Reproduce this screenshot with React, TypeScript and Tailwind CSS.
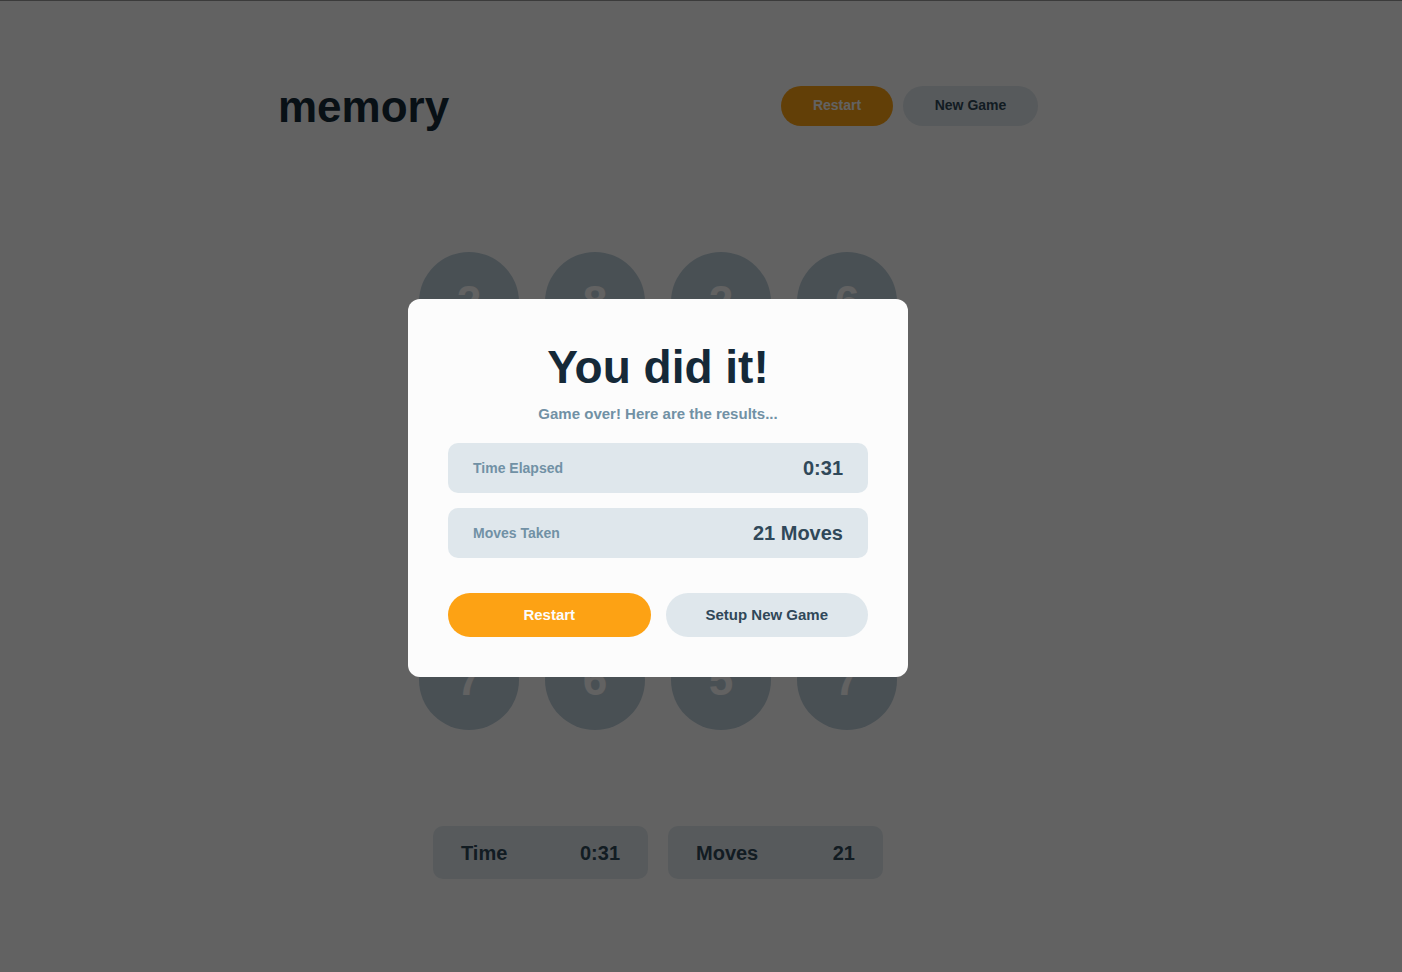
import React from 'react';

const BOARD = [2, 8, 2, 6, 4, 1, 3, 5, 1, 3, 4, 8, 7, 6, 5, 7];

function StatBox({ label, value }: { label: string; value: string }) {
  return (
    <div className="w-[215px] h-[53px] rounded-[10px] bg-[#DFE7EC] flex items-center justify-between px-[28px]">
      <span className="text-[20px] font-bold text-[#304859]">{label}</span>
      <span className="text-[20px] font-bold text-[#304859]">{value}</span>
    </div>
  );
}

function ResultRow({ label, value }: { label: string; value: string }) {
  return (
    <div className="h-[50px] rounded-[10px] bg-[#DFE7EC] flex items-center justify-between px-[25px]">
      <span className="text-[14px] font-bold text-[#7191A5]">{label}</span>
      <span className="text-[20px] font-bold text-[#304859]">{value}</span>
    </div>
  );
}

export default function App() {
  return (
    <div
      className="min-h-screen bg-[#FCFCFC] text-[#152938]"
      style={{ fontFamily: '"Liberation Sans", Arial, sans-serif' }}
    >
      <div className="w-[1316px]">
        {/* header */}
        <header className="w-[760px] mx-auto pt-[82px] flex items-center justify-between">
          <h1 className="pt-[3px] text-[44px] font-bold leading-none text-[#152938]">memory</h1>
          <div className="flex gap-[10px]">
            <button className="w-[112px] h-[40px] rounded-full bg-[#FDA214] text-[#FCFCFC] text-[14px] font-bold">
              Restart
            </button>
            <button className="w-[135px] h-[40px] rounded-full bg-[#DFE7EC] text-[#304859] text-[14px] font-bold">
              New Game
            </button>
          </div>
        </header>

        {/* board */}
        <div className="mt-[123px] w-[478px] mx-auto grid grid-cols-4 gap-[26px]">
          {BOARD.map((n, i) => (
            <div
              key={i}
              className="w-[100px] h-[100px] rounded-full bg-[#BCCED9] flex items-center justify-center text-[44px] font-bold text-[#FCFCFC]"
            >
              {n}
            </div>
          ))}
        </div>

        {/* footer stats */}
        <div className="mt-[96px] flex justify-center gap-[20px]">
          <StatBox label="Time" value="0:31" />
          <StatBox label="Moves" value="21" />
        </div>
      </div>

      {/* overlay */}
      <div className="fixed inset-0 bg-black/[0.61] border-t border-[#3b3b3b]">
        <div className="w-[1316px] pt-[298px] flex justify-center">
          <div className="w-[500px] rounded-[12px] bg-[#FCFCFC] px-[40px] pt-[40px] pb-[40px]">
            <h2 className="h-[56px] leading-[56px] text-center text-[46px] font-bold text-[#152938]">
              You did it!
            </h2>
            <p className="mt-[9px] h-[20px] leading-[20px] text-center text-[15px] font-bold text-[#7191A5]">
              Game over! Here are the results...
            </p>
            <div className="mt-[19px] flex flex-col gap-[15px]">
              <ResultRow label="Time Elapsed" value="0:31" />
              <ResultRow label="Moves Taken" value="21 Moves" />
            </div>
            <div className="mt-[35px] flex gap-[15px]">
              <button className="flex-1 h-[44px] rounded-full bg-[#FDA214] text-[#FCFCFC] text-[15px] font-bold">
                Restart
              </button>
              <button className="flex-1 h-[44px] rounded-full bg-[#DFE7EC] text-[#304859] text-[15px] font-bold">
                Setup New Game
              </button>
            </div>
          </div>
        </div>
      </div>
    </div>
  );
}
